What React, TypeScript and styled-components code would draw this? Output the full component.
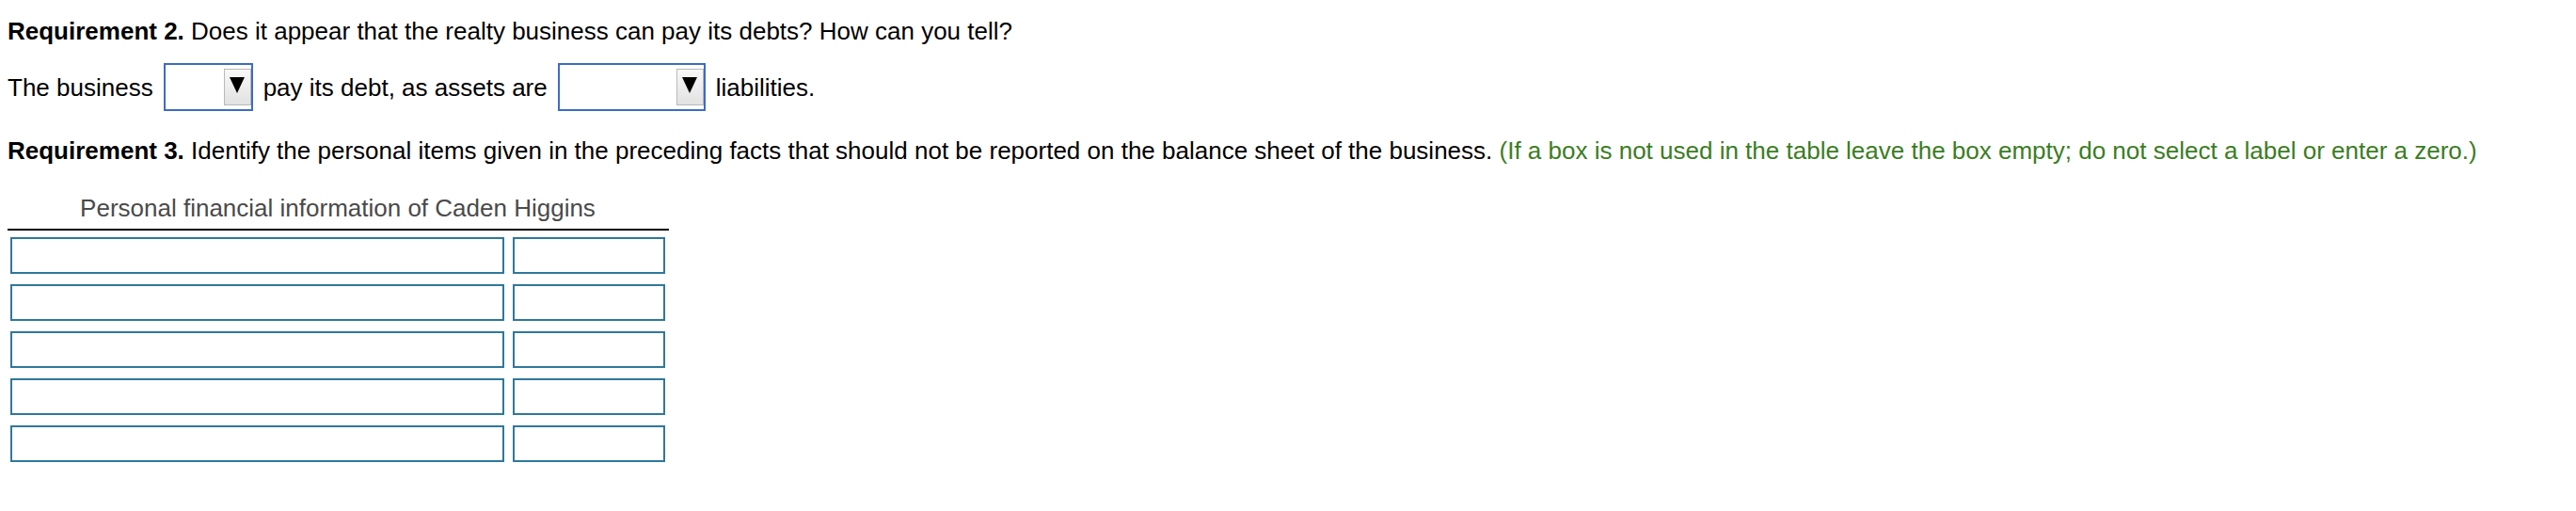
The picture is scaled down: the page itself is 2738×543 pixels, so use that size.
import React from 'react';
import styled, { createGlobalStyle } from 'styled-components';

const GlobalStyle = createGlobalStyle`
  body {
    margin: 8px;
    background: #ffffff;
    font-family: "Liberation Sans", Arial, sans-serif;
    font-size: 26px;
    line-height: 30px;
    color: #000000;
  }
`;

const Page = styled.div`
  display: flex;
  flex-direction: column;
  align-items: flex-start;
`;

const Paragraph = styled.p<{ top: number }>`
  margin: ${props => props.top}px 0 0 0;
  white-space: nowrap;
`;

const Bold = styled.b`
  font-weight: bold;
`;

const Hint = styled.span`
  color: #3a7d22;
`;

const AnswerRow = styled.div`
  display: flex;
  align-items: center;
  gap: 11px;
  margin-top: 19px;
  height: 51px;
  white-space: nowrap;
`;

const Select = styled.div<{ width: number }>`
  box-sizing: border-box;
  width: ${props => props.width}px;
  height: 51px;
  border: 2px solid #3d6bc6;
  background: #ffffff;
  display: flex;
  align-items: center;
  justify-content: flex-end;
`;

const ArrowButton = styled.div`
  box-sizing: border-box;
  width: 29px;
  height: 39px;
  border: 1px solid #b9b9b9;
  background: linear-gradient(#f8f8f8, #e2e2e2);
  display: flex;
  align-items: center;
  justify-content: center;
  padding-bottom: 4px;
`;

const Table = styled.div`
  margin-top: 31px;
  width: 704px;
  margin-left: -1px;
`;

const TableHeader = styled.div`
  text-align: center;
  color: #4a4a4a;
  padding-bottom: 7px;
  border-bottom: 2px solid #000000;
`;

const TableBody = styled.div`
  display: flex;
  flex-direction: column;
  gap: 11px;
  padding: 7px 4px 0 4px;
`;

const InputRow = styled.div`
  display: flex;
  gap: 9px;
`;

const InputBox = styled.div<{ width: number }>`
  box-sizing: border-box;
  width: ${props => props.width}px;
  height: 39px;
  border: 2px solid #2f789b;
  background: #ffffff;
`;

const Arrow = () => (
  <svg width="16" height="17" viewBox="0 0 16 17">
    <polygon points="0,0 16,0 8,17" fill="#000000" />
  </svg>
);

const Dropdown = ({ width }: { width: number }) => (
  <Select width={width}>
    <ArrowButton>
      <Arrow />
    </ArrowButton>
  </Select>
);

export default function App() {
  const rows = [0, 1, 2, 3, 4];
  return (
    <Page>
      <GlobalStyle />
      <Paragraph top={10}>
        <Bold>Requirement 2.</Bold> Does it appear that the realty business can pay its debts? How can you tell?
      </Paragraph>
      <AnswerRow>
        <span>The business</span>
        <Dropdown width={95} />
        <span>pay its debt, as assets are</span>
        <Dropdown width={157} />
        <span>liabilities.</span>
      </AnswerRow>
      <Paragraph top={27}>
        <Bold>Requirement 3.</Bold> Identify the personal items given in the preceding facts that should not be reported on
        the balance sheet of the business.{' '}
        <Hint>(If a box is not used in the table leave the box empty; do not select a label or enter a zero.)</Hint>
      </Paragraph>
      <Table>
        <TableHeader>Personal financial information of Caden Higgins</TableHeader>
        <TableBody>
          {rows.map(r => (
            <InputRow key={r}>
              <InputBox width={525} />
              <InputBox width={162} />
            </InputRow>
          ))}
        </TableBody>
      </Table>
    </Page>
  );
}
